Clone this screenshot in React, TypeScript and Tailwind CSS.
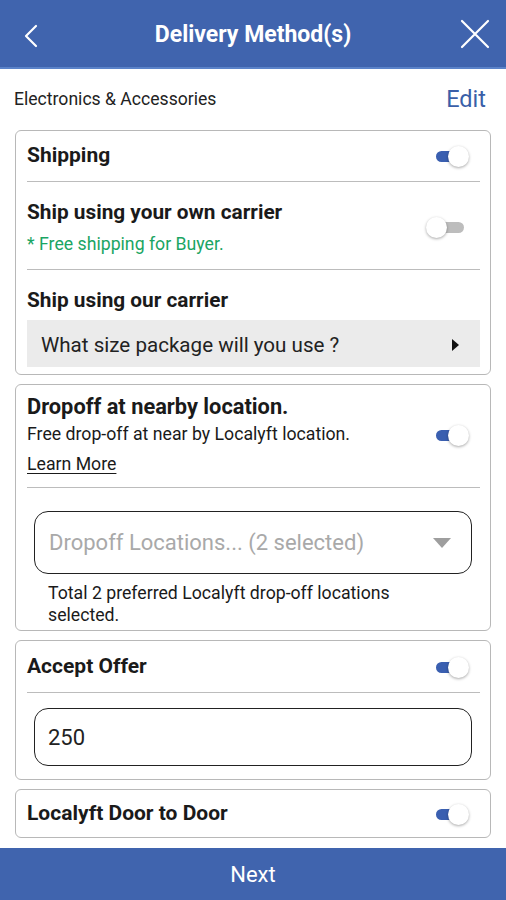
import React from "react";

function Toggle({ on }: { on: boolean }) {
  return (
    <div className="relative w-[36px] h-[22px] shrink-0">
      <div
        className={
          "absolute left-[2px] top-[6px] w-[30px] h-[11px] rounded-full " +
          (on ? "bg-[#3a5fb0]" : "bg-[#bdbdbd]")
        }
      />
      <div
        className={
          "absolute top-[1px] w-[21px] h-[21px] rounded-full bg-white shadow-[0_1px_3px_rgba(0,0,0,0.35)] " +
          (on ? "left-[14px]" : "left-[-6px]")
        }
      />
    </div>
  );
}

function Divider() {
  return <div className="h-px bg-[#bcbcbc] mr-[10px]" />;
}

export default function App() {
  return (
    <div
      className="w-[506px] h-[900px] flex flex-col bg-white text-[#1a1a1a] overflow-hidden"
      style={{ fontFamily: "Roboto, 'Noto Sans', sans-serif" }}
    >
      {/* Header */}
      <div className="h-[69px] shrink-0 bg-[#4064ae] border-b-2 border-[#5b83c9] flex items-center justify-between pl-[20px] pr-[16px] pt-[4px]">
        <svg width="22" height="28" viewBox="0 0 22 28" fill="none">
          <path d="M16 4 L6 14 L16 24" stroke="white" strokeWidth="2.2" strokeLinecap="round" strokeLinejoin="round" />
        </svg>
        <div className="text-white font-bold text-[23px] ml-[4px]">Delivery Method(s)</div>
        <svg width="30" height="30" viewBox="0 0 30 30" fill="none" className="mt-[-4px]">
          <path d="M2 2 L28 28 M28 2 L2 28" stroke="white" strokeWidth="2.2" strokeLinecap="round" />
        </svg>
      </div>

      <div className="flex-1 flex flex-col">
        <div className="h-[61px] flex items-center justify-between pl-[14px] pr-[20px]">
          <span className="text-[17.6px] text-[#222]">Electronics &amp; Accessories</span>
          <span className="text-[23.5px] text-[#3a5fa8]">Edit</span>
        </div>

        {/* Card 1 */}
        <div className="mx-[15px] border border-[#b8b8b8] rounded-[6px] pl-[11px] pb-[7px]">
          <div className="h-[50px] flex items-center justify-between pr-[20px]">
            <span className="text-[21px] font-bold">Shipping</span>
            <Toggle on />
          </div>
          <Divider />
          <div className="h-[87px] flex items-center justify-between pr-[20px]">
            <div className="flex flex-col pt-[2px]">
              <span className="text-[20.8px] font-bold leading-[26px]">Ship using your own carrier</span>
              <span className="text-[17.7px] text-[#1aa563] leading-[22px] mt-[8px]">* Free shipping for Buyer.</span>
            </div>
            <div className="mr-[2px] mt-[2px]">
              <Toggle on={false} />
            </div>
          </div>
          <Divider />
          <div className="h-[50px] flex items-end pb-[7px]">
            <span className="text-[20.8px] font-bold leading-[26px]">Ship using our carrier</span>
          </div>
          <div className="h-[47px] mr-[10px] bg-[#ebebeb] flex items-center justify-between pl-[14px] pr-[20px] pt-[3px]">
            <span className="text-[20.6px] text-[#222]">What size package will you use ?</span>
            <svg width="9" height="14" viewBox="0 0 9 14">
              <path d="M1 1 L8 7 L1 13 Z" fill="#111" />
            </svg>
          </div>
        </div>

        {/* Card 2 */}
        <div className="mx-[15px] mt-[9px] border border-[#b8b8b8] rounded-[6px] pl-[11px] pb-[4px]">
          <div className="flex items-center justify-between pr-[20px] pt-[8px]">
            <div className="flex flex-col">
              <span className="text-[21.8px] font-bold leading-[28px]">Dropoff at nearby location.</span>
              <span className="text-[17.7px] leading-[24px] mt-[1px]">Free drop-off at near by Localyft location.</span>
              <span className="text-[17.7px] leading-[24px] mt-[6px] underline underline-offset-[3px]">Learn More</span>
            </div>
            <Toggle on />
          </div>
          <div className="mt-[11px]">
            <Divider />
          </div>
          <div className="pl-[7px] pr-[18px] pt-[23px]">
            <div className="h-[63px] border-[1.5px] border-[#222] rounded-[14px] flex items-center justify-between pl-[14px] pr-[20px]">
              <span className="text-[22px] text-[#a9a9a9]">Dropoff Locations... (2 selected)</span>
              <svg width="18" height="10" viewBox="0 0 18 10">
                <path d="M0 0 L18 0 L9 10 Z" fill="#9e9e9e" />
              </svg>
            </div>
            <div className="text-[17.7px] leading-[22px] pl-[14px] pr-[40px] pt-[8px]">
              Total 2 preferred Localyft drop-off locations selected.
            </div>
          </div>
        </div>

        {/* Card 3 */}
        <div className="mx-[15px] mt-[9px] border border-[#b8b8b8] rounded-[6px] pl-[11px] pb-[13px]">
          <div className="h-[51px] flex items-center justify-between pr-[20px]">
            <span className="text-[21px] font-bold">Accept Offer</span>
            <Toggle on />
          </div>
          <Divider />
          <div className="pl-[7px] pr-[18px] pt-[15px]">
            <div className="h-[58px] border-[1.5px] border-[#222] rounded-[14px] flex items-center pl-[13px]">
              <span className="text-[22px] text-[#222]">250</span>
            </div>
          </div>
        </div>

        {/* Card 4 */}
        <div className="mx-[15px] mt-[9px] h-[49px] border border-[#b8b8b8] rounded-[6px] pl-[11px] pr-[20px] flex items-center justify-between">
          <span className="text-[21px] font-bold">Localyft Door to Door</span>
          <Toggle on />
        </div>
      </div>

      <div className="h-[52px] shrink-0 bg-[#4064ae] flex items-center justify-center">
        <span className="text-white text-[22px]">Next</span>
      </div>
    </div>
  );
}
